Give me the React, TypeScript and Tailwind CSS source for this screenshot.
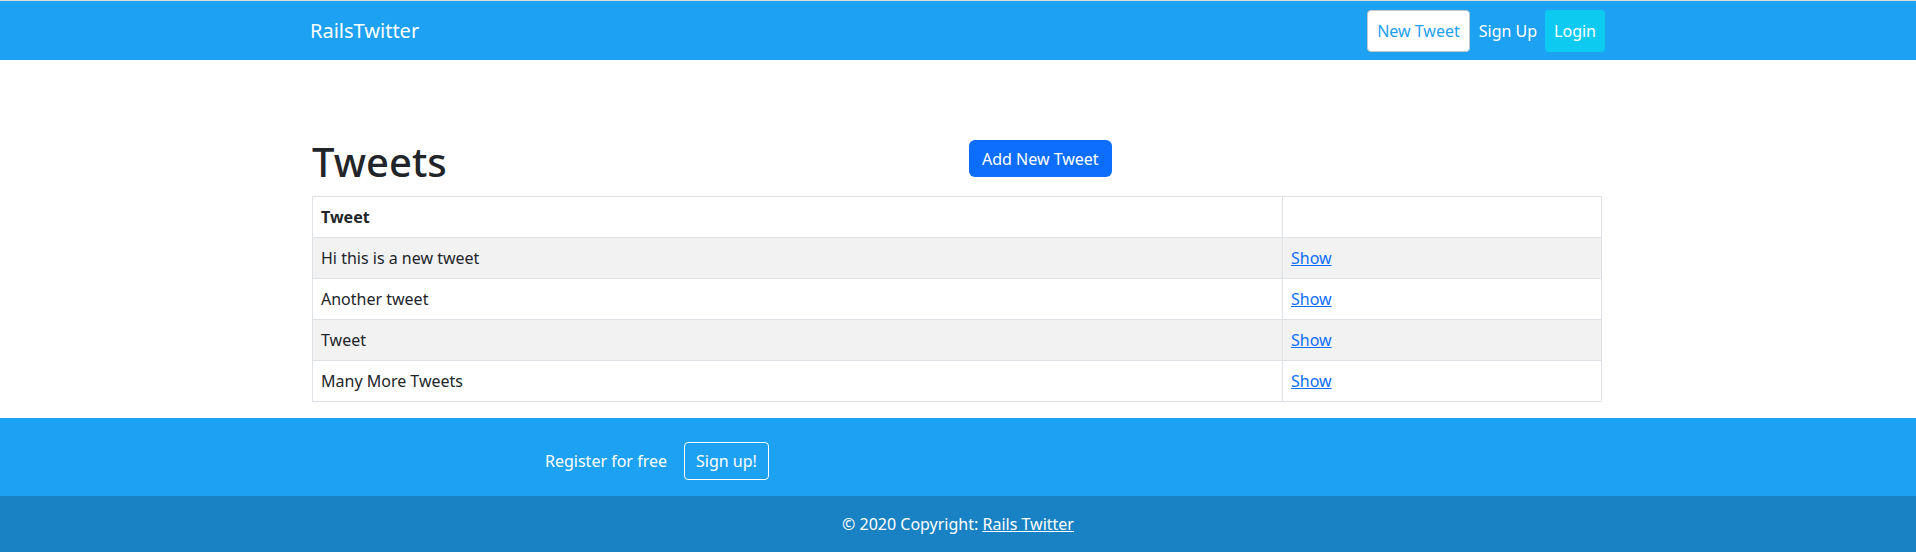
const tweets = [
  "Hi this is a new tweet",
  "Another tweet",
  "Tweet",
  "Many More Tweets",
];

function Navbar() {
  return (
    <nav className="border-t border-[#dcdcdc] bg-[#1da1f2]">
      <div className="mx-auto flex h-[59px] w-[1296px] items-center justify-between">
        <a href="#" className="text-[20px] leading-[30px] text-white">
          RailsTwitter
        </a>
        <div className="mr-[1px] flex items-center">
          <a
            href="#"
            className="flex h-[42px] items-center rounded-[4px] border border-[#c4c8cc] bg-white px-[9px] text-[#1da1f2]"
          >
            New Tweet
          </a>
          <a href="#" className="ml-[9px] px-0 text-white">
            Sign Up
          </a>
          <a
            href="#"
            className="ml-[8px] flex h-[42px] items-center rounded-[4px] bg-[#0dcaf0] px-[9px] text-white"
          >
            Login
          </a>
        </div>
      </div>
    </nav>
  );
}

function TweetsTable() {
  return (
    <table className="w-full border-collapse border border-[#dee2e6] text-[#212529]">
      <thead>
        <tr className="h-[41px]">
          <th className="w-[970px] border border-[#dee2e6] px-2 py-2 text-left font-bold">
            Tweet
          </th>
          <th className="border border-[#dee2e6] px-2 py-2" />
        </tr>
      </thead>
      <tbody>
        {tweets.map((t, i) => (
          <tr
            key={t}
            className={i % 2 === 0 ? "h-[41px] bg-[#f2f2f2]" : "h-[41px] bg-white"}
          >
            <td className="border border-[#dee2e6] px-2 py-2">{t}</td>
            <td className="border border-[#dee2e6] px-2 py-2">
              <a href="#" className="text-[#0d6efd] underline">
                Show
              </a>
            </td>
          </tr>
        ))}
      </tbody>
    </table>
  );
}

export default function App() {
  return (
    <div className="min-h-[552px] bg-white font-['Noto_Sans',sans-serif] text-[16px] leading-[24px] text-[#212529]">
      <Navbar />
      <main className="mx-auto w-[1296px] pt-[78px] pb-[16px]">
        <div className="ml-[2px] w-[1290px]">
          <div className="grid grid-cols-2">
            <h1 className="text-[40px] font-medium leading-[48px]">Tweets</h1>
            <div className="pl-[12px] pt-[2px]">
              <button className="h-[37px] rounded-[6px] bg-[#0d6efd] px-[13px] text-white">
                Add New Tweet
              </button>
            </div>
          </div>
          <div className="mt-[10px]">
            <TweetsTable />
          </div>
        </div>
      </main>
      <footer className="text-white">
        <div className="bg-[#1da1f2]">
          <div className="mx-auto flex h-[78px] w-[1296px] items-center pl-[235px] pt-[8px]">
            <span>Register for free</span>
            <a
              href="#"
              className="ml-[17px] flex h-[38px] items-center rounded-[4px] border border-white px-[11px]"
            >
              Sign up!
            </a>
          </div>
        </div>
        <div className="flex h-[56px] items-center justify-center bg-[#1982c4]">
          <span>
            © 2020 Copyright:{" "}
            <a href="#" className="text-white underline">
              Rails Twitter
            </a>
          </span>
        </div>
      </footer>
    </div>
  );
}
